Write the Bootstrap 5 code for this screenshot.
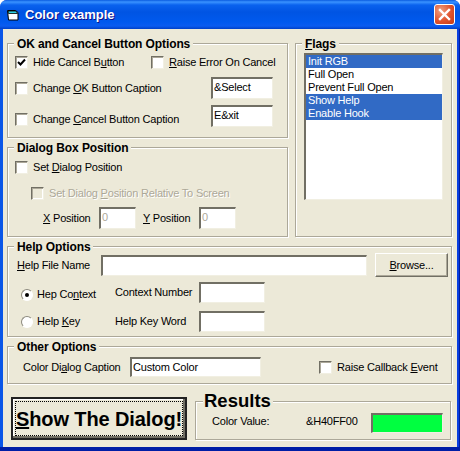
<!DOCTYPE html>
<html lang="en">
<head>
<meta charset="utf-8">
<title>Color example</title>
<link href="https://cdn.jsdelivr.net/npm/bootstrap@5.3.0/dist/css/bootstrap.min.css" rel="stylesheet">
<style>
html,body{margin:0;padding:0;background:#fff;overflow:hidden}
body{font-family:"Liberation Sans",Arial,sans-serif;font-size:11px;letter-spacing:-.2px;line-height:13px;color:#000}
.xp-win{width:460px;height:451px;border-radius:7px 7px 0 0;display:flex;flex-direction:column;background:linear-gradient(180deg,transparent 447px,#001ea6 447px),linear-gradient(90deg,#0a56e8 0,#0a56e8 3px,#0831d9 3px,#0831d9 457px,#0a3fe0 457px,#0a3fe0 459px,#001ea0 459px)}
.xp-title{height:29px;flex:none;border-radius:7px 7px 0 0;background:linear-gradient(180deg,#0a5ce0 0,#3a93ff 2px,#0a62ee 5px,#0054e3 12px,#0059ee 22px,#0a5cf0 26px,#0040c8 29px);display:flex;align-items:center;padding:0 5px 0 7px;color:#fff;font-weight:700;font-size:13px;letter-spacing:0}
.xp-title span{margin-left:6px;text-shadow:1px 1px #0f1089;flex:1}
.xp-close{width:21px;height:21px;border:1px solid #fff;border-radius:3px;background:radial-gradient(circle at 30% 30%,#f0a080,#e0532d 55%,#c23a15);display:flex;align-items:center;justify-content:center}
.xp-client{flex:1;margin:0 3px 4px;background:#ece9d8;padding:7px 5px 0 4px;display:flex;flex-direction:column;min-height:0}
.xp-upper{display:flex;gap:7px;flex:none}
.xp-leftcol{width:281px;display:flex;flex-direction:column;gap:2px}
fieldset.xp-frame{min-width:0;border:1px solid #aca899;border-radius:0;padding:0;box-shadow:1px 1px #fff,inset 1px 1px #fff;display:block}
fieldset.xp-frame>legend{float:none;width:auto;margin:0 0 0 6px;padding:2px 3px 0;font-size:12px;line-height:12px;font-weight:700;letter-spacing:-.1px;background:#ece9d8;color:#000}
u{text-decoration:underline;text-underline-offset:1px}
.xp-ok{height:102px}
.xp-pos{height:97px}
.xp-flags{width:157px;height:201px}
.xp-help{height:98px;margin-top:2px;flex:none}
.xp-other{height:45px;margin-top:2px;flex:none}
.xp-bottom{display:flex;align-items:flex-end;margin-top:9px;gap:8px;padding-left:4px;flex:none}
.xp-row{display:flex;align-items:center;white-space:nowrap}
.xp-cb{width:13px;height:13px;flex:none;display:block;background:#fff;border:1px solid;border-color:#716f64 #f1efe2 #f1efe2 #716f64;box-shadow:inset 1px 1px #aca899,inset -1px -1px #fff;margin-right:5px}
.xp-cb-on{display:flex;align-items:center;justify-content:center}
.xp-cb-off{background:#ece9d8}
.xp-radio{width:12px;height:12px;border-radius:50%;background:#fff;border:1px solid #8c8a7e;border-right-color:#fff;border-bottom-color:#fff;flex:none;margin-right:4px;display:flex;align-items:center;justify-content:center}
.xp-radio i{display:block;width:4px;height:4px;border-radius:50%;background:#000}
.xp-tb{display:block;height:22px;flex:none;background:#fff;border:2px solid;border-color:#716f64 #f1efe2 #f1efe2 #716f64;border-width:2px 1px 1px 2px;padding:0 1px;line-height:16px;color:#000;white-space:nowrap}
.xp-tb-off{color:#aca899}
.xp-dis{color:#aca899;text-shadow:1px 1px #fff}
.xp-list{background:#fff;height:147px;width:139px;margin:3px 0 0 8px;border:2px solid;border-color:#716f64 #f1efe2 #f1efe2 #716f64;border-width:2px 1px 1px 2px}
.xp-list div{height:13px;line-height:13px;padding-left:2px}
.xp-list .xp-sel{background:#316ac5;color:#fff}
.xp-browse{width:73px;height:24px;flex:none;margin-left:8px;background:#ece9d8;border:1px solid;border-color:#fff #716f64 #716f64 #fff;box-shadow:inset -1px -1px #aca899;font-size:11px;line-height:13px;letter-spacing:-.2px;padding:0;color:#000;border-radius:0}
.xp-show{width:176px;height:43px;padding:0;background:#ece9d8;border:2px solid #222;box-shadow:inset -2px -2px #716f64,inset 1px 1px #fff;font:700 20px/1 "Liberation Sans",Arial,sans-serif;letter-spacing:-.1px;color:#000;border-radius:0;flex:none;outline:1px dotted #000;outline-offset:-5px;white-space:nowrap}
.xp-results{width:256px;height:47px;flex:none}
fieldset.xp-results>legend{font-size:18.5px;line-height:16px;letter-spacing:0;margin-left:7px;padding:0 2px 0 1px}
.xp-green{width:72px;height:20px;flex:none;background:#00ff40;border:2px solid;border-color:#716f64 #f1efe2 #f1efe2 #716f64;border-width:2px 1px 1px 2px}
/* rows */
.r-ok1{margin:6px 0 0 7px}
.r-ok2{margin:8px 0 0 7px}
.r-ok3{margin:6px 0 0 7px}
.r-ok3 .xp-cb,.r-ok3 .l-grow{margin-top:6px}
.l-hide{width:118px}
.l-grow{flex:1}
.b-cap{width:62px;margin-right:14px}
.r-p1{margin:7px 0 0 7px}
.r-p2{margin:13px 0 0 23px}
.r-p3{margin:7px 0 0 35px}
.l-x{width:56px}
.l-y{width:63px;padding-left:7px}
.b-pos{width:37px}
.r-h1{margin:0 0 0 9px}
.l-file{width:84px}
.b-file{width:266px;height:21px}
.r-h2{margin:5px 0 0 13px}
.r-h2 .xp-radio,.r-h2 .l-rad{margin-top:4px}
.r-h3{margin:8px 0 0 13px}
.l-rad{width:78px}
.l-cn{width:84px}
.b-cn{width:66px;height:21px}
.r-o{margin:4px 0 0 15px}
.l-dc{width:107px}
.b-dc{width:131px;height:20px}
.cb-cb{margin-left:58px}
.r-r{margin:4px 0 0 16px}
.l-cv{width:94px}
.l-hv{width:65px}
.l-cv,.l-hv{margin-bottom:4px}
</style>
</head>
<body>
<div class="xp-win">
  <div class="xp-title">
    <svg width="12" height="12" viewBox="0 0 12 12"><path d="M.5 1.500h8l2.500 2v7.500H1.500z" fill="#fff" stroke="#000"/><path d="M1 2h8l1.500 2.500H1.500z" fill="#2fd0e0" stroke="#000" stroke-width=".8"/></svg>
    <span>Color example</span>
    <div class="xp-close"><svg width="13" height="13" viewBox="0 0 13 13"><path d="M2 2l9 9M11 2l-9 9" stroke="#fff" stroke-width="2.4" stroke-linecap="square"/></svg></div>
  </div>
  <div class="xp-client">
    <div class="xp-upper">
      <div class="xp-leftcol">
        <fieldset class="xp-frame xp-ok">
          <legend>OK and Cancel Button Options</legend>
          <div class="xp-row r-ok1">
            <span class="xp-cb xp-cb-on"><svg width="9" height="9" viewBox="0 0 9 9"><path d="M1 4l2.500 2.500L8 1.500" fill="none" stroke="#000" stroke-width="2"/></svg></span>
            <span class="l-hide">Hide Cancel B<u>u</u>tton</span>
            <span class="xp-cb"></span><span><u>R</u>aise Error On Cancel</span>
          </div>
          <div class="xp-row r-ok2">
            <span class="xp-cb"></span><span class="l-grow">Change <u>O</u>K Button Caption</span>
            <span class="xp-tb b-cap">&amp;Select</span>
          </div>
          <div class="xp-row r-ok3">
            <span class="xp-cb"></span><span class="l-grow">Change <u>C</u>ancel Button Caption</span>
            <span class="xp-tb b-cap">E&amp;xit</span>
          </div>
        </fieldset>
        <fieldset class="xp-frame xp-pos">
          <legend>Dialog Box Position</legend>
          <div class="xp-row r-p1"><span class="xp-cb"></span><span>Set <u>D</u>ialog Position</span></div>
          <div class="xp-row xp-dis r-p2"><span class="xp-cb xp-cb-off"></span><span>Set Dialog <u>P</u>osition Relative To Screen</span></div>
          <div class="xp-row r-p3">
            <span class="l-x"><u>X</u> Position</span><span class="xp-tb xp-tb-off b-pos">0</span>
            <span class="l-y"><u>Y</u> Position</span><span class="xp-tb xp-tb-off b-pos">0</span>
          </div>
        </fieldset>
      </div>
      <fieldset class="xp-frame xp-flags">
        <legend><u>F</u>lags</legend>
        <div class="xp-list">
          <div class="xp-sel">Init RGB</div>
          <div>Full Open</div>
          <div>Prevent Full Open</div>
          <div class="xp-sel">Show Help</div>
          <div class="xp-sel">Enable Hook</div>
        </div>
      </fieldset>
    </div>
    <fieldset class="xp-frame xp-help">
      <legend>Help Options</legend>
      <div class="xp-row r-h1">
        <span class="l-file"><u>H</u>elp File Name</span>
        <span class="xp-tb b-file"></span>
        <button type="button" class="xp-browse btn"><u>B</u>rowse...</button>
      </div>
      <div class="xp-row r-h2">
        <span class="xp-radio"><i></i></span><span class="l-rad">Hep Co<u>n</u>text</span>
        <span class="l-cn">Context Number</span><span class="xp-tb b-cn"></span>
      </div>
      <div class="xp-row r-h3">
        <span class="xp-radio"></span><span class="l-rad">Help <u>K</u>ey</span>
        <span class="l-cn">Help Key Word</span><span class="xp-tb b-cn"></span>
      </div>
    </fieldset>
    <fieldset class="xp-frame xp-other">
      <legend>Other Options</legend>
      <div class="xp-row r-o">
        <span class="l-dc">Color Di<u>a</u>log Caption</span>
        <span class="xp-tb b-dc">Custom Color</span>
        <span class="xp-cb cb-cb"></span><span>Raise Callback <u>E</u>vent</span>
      </div>
    </fieldset>
    <div class="xp-bottom">
      <button type="button" class="xp-show btn"><u>S</u>how The Dialog!</button>
      <fieldset class="xp-frame xp-results">
        <legend>Results</legend>
        <div class="xp-row r-r">
          <span class="l-cv">Color Value:</span><span class="l-hv">&amp;H40FF00</span>
          <span class="xp-green"></span>
        </div>
      </fieldset>
    </div>
  </div>
</div>
<script src="https://cdn.jsdelivr.net/npm/bootstrap@5.3.0/dist/js/bootstrap.bundle.min.js"></script>
</body>
</html>
